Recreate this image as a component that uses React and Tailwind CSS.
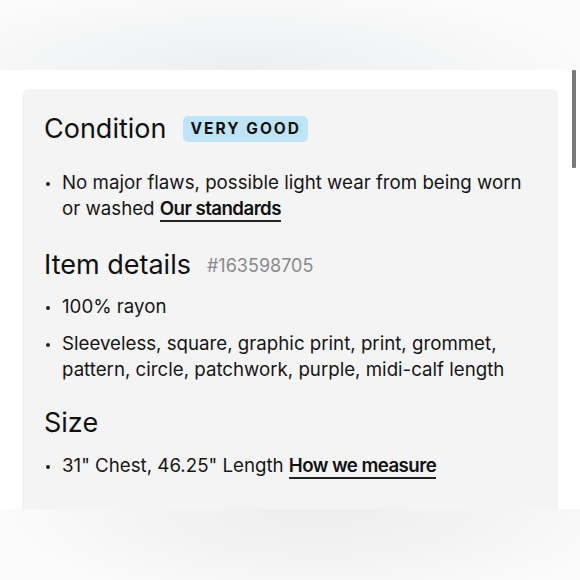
import React from 'react';

const font = { fontFamily: 'Inter, "Liberation Sans", sans-serif' };

const Bullet = ({ children, className = '' }) => (
  <li className={`flex text-[18.7px] leading-[26px] text-[#161616] ${className}`}>
    <span className="w-[18px] shrink-0 flex justify-start pl-[2px] pt-[12px]">
      <span className="w-[4px] h-[4px] rounded-full bg-[#222]" />
    </span>
    <span>{children}</span>
  </li>
);

const LinkText = ({ children }) => (
  <span className="font-semibold tracking-[-0.03em] text-[#111] border-b-2 border-[#222]">{children}</span>
);

export default function App() {
  return (
    <div className="relative w-[580px] h-[580px] overflow-hidden bg-white flex flex-col" style={font}>
      {/* top fade */}
      <div className="h-[70px] shrink-0 bg-[radial-gradient(ellipse_60%_120%_at_42%_100%,#eceef0_0%,#f4f5f6_55%,#fbfbfb_100%)]" />

      {/* content */}
      <div className="flex-1 px-[22px] pt-[19px]">
        <div className="h-full bg-[#f4f4f4] rounded-t-[8px] pl-[22px] pr-[24px] pt-[24px]">
          <div className="flex items-center gap-[17px] h-[32px]">
            <h2 className="text-[27px] leading-[32px] text-[#111]">Condition</h2>
            <span className="bg-[#bfe4f8] rounded-[5px] h-[26px] px-[7px] flex items-center text-[15.5px] font-bold tracking-[0.13em] text-[#111]">
              VERY GOOD
            </span>
          </div>
          <ul className="mt-[25px]">
            <Bullet>
              No major flaws, possible light wear from being worn or washed <LinkText>Our standards</LinkText>
            </Bullet>
          </ul>

          <div className="flex items-center gap-[16px] h-[32px] mt-[27px]">
            <h2 className="text-[27px] leading-[32px] text-[#111]">Item details</h2>
            <span className="text-[18px] text-[#8a8a8a] pt-[1px]">#163598705</span>
          </div>
          <ul className="mt-[13px] flex flex-col gap-[11px]">
            <Bullet>100% rayon</Bullet>
            <Bullet>Sleeveless, square, graphic print, print, grommet, pattern, circle, patchwork, purple, midi-calf length</Bullet>
          </ul>

          <h2 className="text-[27px] leading-[32px] text-[#111] mt-[24px]">Size</h2>
          <ul className="mt-[14px]">
            <Bullet>
              31" Chest, 46.25" Length <LinkText>How we measure</LinkText>
            </Bullet>
          </ul>
        </div>
      </div>

      {/* bottom fade */}
      <div className="h-[71px] shrink-0 bg-[radial-gradient(ellipse_55%_140%_at_55%_0%,#eeeeee_0%,#f3f3f3_50%,#fbfbfb_100%)]" />

      {/* scrollbar */}
      <div className="absolute left-[572px] top-[70px] w-[4px] h-[98px] bg-[#7a7a7a] rounded-[1px]" />
    </div>
  );
}
